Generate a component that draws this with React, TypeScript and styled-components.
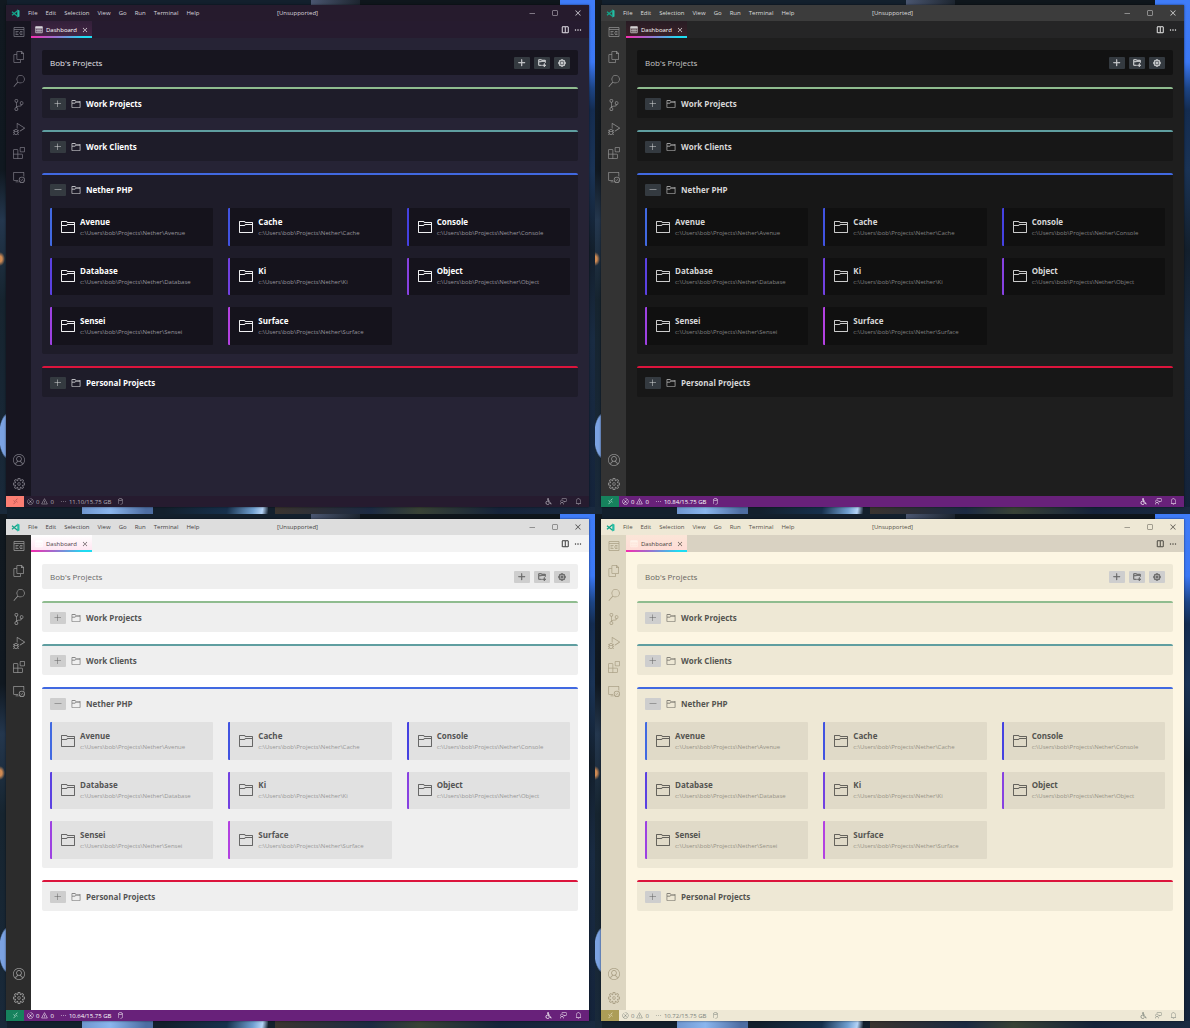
import React, { useState } from "react";
import styled, { createGlobalStyle, ThemeProvider } from "styled-components";
import {
  VscAccount,
  VscAdd,
  VscBell,
  VscChromeClose,
  VscChromeMaximize,
  VscChromeMinimize,
  VscClose,
  VscDatabase,
  VscDebugAlt,
  VscEllipsis,
  VscError,
  VscExtensions,
  VscFeedback,
  VscFiles,
  VscFolder,
  VscGear,
  VscNewFolder,
  VscRemote,
  VscRemoteExplorer,
  VscRemove,
  VscSearch,
  VscSettingsGear,
  VscSourceControl,
  VscSplitHorizontal,
  VscWarning,
} from "react-icons/vsc";

/* ---------- themes ---------- */

interface EditorTheme {
  name: string;
  memory: string;
  titleBg: string;
  titleText: string;
  activityBg: string;
  activityIcon: string;
  tabBarBg: string;
  tabBg: string;
  tabText: string;
  tabIcon: string;
  editorBg: string;
  headerBg: string;
  headerText: string;
  cardBg: string;
  itemBg: string;
  strong: string;
  folder: string;
  path: string;
  buttonBg: string;
  buttonIcon: string;
  statusBg: string;
  statusText: string;
  remoteBg: string;
  remoteIcon: string;
}

const themes: EditorTheme[] = [
  {
    name: "Synthwave",
    memory: "11.10/15.75 GB",
    titleBg: "#261b2d",
    titleText: "#d8d4dc",
    activityBg: "#171520",
    activityIcon: "#75737d",
    tabBarBg: "#261b2f",
    tabBg: "linear-gradient(#33203a, #432544)",
    tabText: "#ffffff",
    tabIcon: "#d8d5db",
    editorBg: "#262335",
    headerBg: "#17151f",
    headerText: "#e6e5ea",
    cardBg: "#1e1c29",
    itemBg: "#15131c",
    strong: "#ffffff",
    folder: "#f0f0f2",
    path: "#98969e",
    buttonBg: "#343a40",
    buttonIcon: "#d9dbdc",
    statusBg: "#261b2f",
    statusText: "#b4afb9",
    remoteBg: "#fb7e73",
    remoteIcon: "#8c3f45",
  },
  {
    name: "Dark",
    memory: "10.84/15.75 GB",
    titleBg: "#3c3c3c",
    titleText: "#dcdcdc",
    activityBg: "#333333",
    activityIcon: "#8c8c8c",
    tabBarBg: "#252526",
    tabBg: "linear-gradient(#281c24, #3a2028)",
    tabText: "#ffffff",
    tabIcon: "#d4d0d2",
    editorBg: "#1e1e1e",
    headerBg: "#121212",
    headerText: "#c8c8c8",
    cardBg: "#171717",
    itemBg: "#101010",
    strong: "#d8d8d8",
    folder: "#cccccc",
    path: "#828282",
    buttonBg: "#343a40",
    buttonIcon: "#d9dbdc",
    statusBg: "#68217a",
    statusText: "#ffffff",
    remoteBg: "#16825d",
    remoteIcon: "#e8fff6",
  },
  {
    name: "Light",
    memory: "10.64/15.75 GB",
    titleBg: "#dddddd",
    titleText: "#444444",
    activityBg: "#2c2c2c",
    activityIcon: "#959595",
    tabBarBg: "#f3f3f3",
    tabBg: "linear-gradient(#ffffff, #ffe6f2)",
    tabText: "#4a4045",
    tabIcon: "#ffffff",
    editorBg: "#ffffff",
    headerBg: "#efefef",
    headerText: "#686868",
    cardBg: "#efefef",
    itemBg: "#e1e1e1",
    strong: "#545454",
    folder: "#666666",
    path: "#979797",
    buttonBg: "#cecece",
    buttonIcon: "#606060",
    statusBg: "#68217a",
    statusText: "#ffffff",
    remoteBg: "#16825d",
    remoteIcon: "#e8fff6",
  },
  {
    name: "Solarized",
    memory: "10.72/15.75 GB",
    titleBg: "#eee8d5",
    titleText: "#55524a",
    activityBg: "#ddd6c1",
    activityIcon: "#aca288",
    tabBarBg: "#d9d2c2",
    tabBg: "linear-gradient(#fbe6d8, #ffdcd6)",
    tabText: "#44403a",
    tabIcon: "#fff3ea",
    editorBg: "#fdf6e3",
    headerBg: "#eee8d5",
    headerText: "#686660",
    cardBg: "#eee8d5",
    itemBg: "#e0dac8",
    strong: "#545450",
    folder: "#64625c",
    path: "#969286",
    buttonBg: "#cecece",
    buttonIcon: "#606060",
    statusBg: "#eee8d5",
    statusText: "#7c837c",
    remoteBg: "#ac9d57",
    remoteIcon: "#fdf6e3",
  },
];

declare module "styled-components" {
  export interface DefaultTheme extends EditorTheme {}
}

/* ---------- data ---------- */

interface Project {
  name: string;
  color: string;
}

interface Category {
  name: string;
  color: string;
  open?: boolean;
  projects: Project[];
}

const categories: Category[] = [
  { name: "Work Projects", color: "#8fbc8f", projects: [] },
  { name: "Work Clients", color: "#5f9ea0", projects: [] },
  {
    name: "Nether PHP",
    color: "#4169e1",
    open: true,
    projects: [
      { name: "Avenue", color: "#4169e1" },
      { name: "Cache", color: "#4153e1" },
      { name: "Console", color: "#4541e1" },
      { name: "Database", color: "#5b41e1" },
      { name: "Ki", color: "#7141e1" },
      { name: "Object", color: "#8741e1" },
      { name: "Sensei", color: "#9d41e1" },
      { name: "Surface", color: "#b341e1" },
    ],
  },
  { name: "Personal Projects", color: "#dc143c", projects: [] },
];

const menus = ["File", "Edit", "Selection", "View", "Go", "Run", "Terminal", "Help"];

/* ---------- layout ---------- */

const GlobalStyle = createGlobalStyle`
  * { box-sizing: border-box; }
  body {
    margin: 0;
    background: #121a22;
    font-family: "Open Sans", "Noto Sans", sans-serif;
  }
  button {
    margin: 0;
    padding: 0;
    border: 0;
    background: none;
    color: inherit;
    font: inherit;
    cursor: pointer;
  }
  h1, h2, h3, p, ul { margin: 0; padding: 0; }
  svg { display: block; flex: none; }
`;

const Desktops = styled.main`
  display: grid;
  grid-template-columns: 1fr 1fr;
  grid-auto-rows: 1fr;
  min-height: 100vh;
`;

const Desktop = styled.section`
  display: flex;
  padding: 5px 6px 7px 6px;
  background:
    radial-gradient(ellipse 5px 7px at 0 259px, #d08a52 40%, transparent) no-repeat,
    radial-gradient(ellipse 11px 25px at 9px 436px, #7ba2e2 85%, transparent 95%) 0 0 / 7px 100% no-repeat,
    linear-gradient(90deg, #6f96cf, #8ab6ee 40%, #4d6da2 90%) 82px 100% / 71px 7px no-repeat,
    linear-gradient(100deg, transparent, #16304c 60%, #6f9fd0 85%, #b4d4f8 94%, transparent) 165px 100% / 103px 7px no-repeat,
    linear-gradient(90deg, #3a342f, #1c2a42 30%, #384235 45%, #15233a 70%, #1a2a40) 100% 100% / 320px 7px no-repeat,
    linear-gradient(#0f161c, #0f161c) 360px 0 / 200px 5px no-repeat,
    linear-gradient(90deg, #4a5670, #1c242e) 311px 0 / 50px 5px no-repeat,
    linear-gradient(#3f7cf8, #3f7cf8) 100% 0 / 35px 5px no-repeat,
    linear-gradient(#3f7cf8, #3b78f4 62px, #1d4586 88px, #142c50 110px, #1a3355 170px, #131f2c 250px, #192b42 340px, #14233a) 100% 0 / 6px 100% no-repeat,
    linear-gradient(#111920, #101820 170px, #24374e 220px, #16242f 300px, #19293a) 0 0 / 7px 100% no-repeat,
    #13202d;
`;

const Window = styled.article`
  flex: 1;
  min-width: 0;
  display: flex;
  flex-direction: column;
  background: ${(p) => p.theme.editorBg};
  box-shadow: 0 0 2px rgba(0, 0, 0, 0.6);
`;

/* title bar */

const TitleBar = styled.header`
  display: grid;
  grid-template-columns: 1fr auto 1fr;
  align-items: center;
  height: 16px;
  background: ${(p) => p.theme.titleBg};
  color: ${(p) => p.theme.titleText};
  font-size: 6px;
  line-height: 8px;
`;

const MenuBar = styled.nav`
  display: flex;
  align-items: center;
  gap: 8px;
  padding-left: 5px;
  white-space: nowrap;
`;

const WindowControls = styled.div`
  display: flex;
  justify-content: flex-end;
`;

const WindowControl = styled.button`
  display: grid;
  place-items: center;
  width: 23px;
  height: 16px;
  font-size: 8px;
`;

/* body */

const Body = styled.div`
  flex: 1;
  display: flex;
  min-height: 0;
`;

const ActivityBar = styled.nav`
  display: flex;
  flex-direction: column;
  width: 25px;
  background: ${(p) => p.theme.activityBg};
  color: ${(p) => p.theme.activityIcon};
`;

const ActivityButton = styled.button`
  display: grid;
  place-items: center;
  height: 24px;
  font-size: 12px;
`;

const Spacer = styled.div`
  flex: 1;
`;

const Editor = styled.div`
  flex: 1;
  min-width: 0;
`;

const TabBar = styled.div`
  display: flex;
  align-items: stretch;
  height: 17px;
  background: ${(p) => p.theme.tabBarBg};
  color: ${(p) => p.theme.titleText};
`;

const Tab = styled.div`
  display: flex;
  align-items: center;
  gap: 3px;
  padding: 2px 3px 0 4px;
  border-bottom: 2px solid;
  border-image: linear-gradient(90deg, #f92aad, #9b6fd0 40%, #1fdcf2 85%) 1;
  background: ${(p) => p.theme.tabBg};
  color: ${(p) => p.theme.tabText};
  font-size: 6px;
  line-height: 8px;
`;

const TabIcon = styled.svg`
  width: 8px;
  height: 8px;
  color: ${(p) => p.theme.tabIcon};
`;

const TabClose = styled.button`
  padding-left: 1px;
  font-size: 8px;
`;

const TabActions = styled.div`
  display: flex;
  align-items: center;
  gap: 5px;
  margin-left: auto;
  padding-right: 7px;
  font-size: 8px;

  svg {
    stroke-width: 1;
  }
`;

/* dashboard */

const Dashboard = styled.div`
  display: flex;
  flex-direction: column;
  gap: 12px;
  padding: 12px 11px;
`;

const DashboardHeader = styled.header`
  display: flex;
  align-items: center;
  gap: 4px;
  height: 25px;
  padding: 0 8px;
  border-radius: 2px;
  background: ${(p) => p.theme.headerBg};
`;

const DashboardTitle = styled.h1`
  flex: 1;
  color: ${(p) => p.theme.headerText};
  font-size: 8px;
  font-weight: 400;
  line-height: 12px;
`;

const IconButton = styled.button`
  display: grid;
  place-items: center;
  width: 16px;
  height: 12px;
  border-radius: 1px;
  background: ${(p) => p.theme.buttonBg};
  color: ${(p) => p.theme.buttonIcon};
  font-size: 8px;
`;

const HeaderButton = styled(IconButton)`
  svg {
    stroke-width: 1;
  }
`;

const CategoryCard = styled.section<{ $color: string }>`
  border-top: 2px solid ${(p) => p.$color};
  border-radius: 2px;
  background: ${(p) => p.theme.cardBg};
`;

const CategoryHead = styled.div`
  display: flex;
  align-items: center;
  gap: 5px;
  padding: 9px 8px 8px;
  color: ${(p) => p.theme.folder};
  font-size: 10px;
`;

const CategoryName = styled.h2`
  color: ${(p) => p.theme.strong};
  font-size: 8px;
  font-weight: 700;
  line-height: 12px;
`;

const ProjectGrid = styled.ul`
  display: grid;
  grid-template-columns: repeat(3, 1fr);
  gap: 12px 15px;
  min-height: 137px;
  margin: 4px 8px 9px;
  list-style: none;
`;

const ProjectCell = styled.li`
  display: grid;
  min-width: 0;
`;

const ProjectCard = styled.button<{ $color: string }>`
  display: flex;
  align-items: center;
  gap: 4px;
  min-width: 0;
  padding: 0 8px;
  border-left: 2px solid ${(p) => p.$color};
  border-radius: 1px;
  background: ${(p) => p.theme.itemBg};
  color: ${(p) => p.theme.folder};
  font-size: 16px;
  text-align: left;
`;

const ProjectText = styled.span`
  display: flex;
  flex-direction: column;
  min-width: 0;
`;

const ProjectName = styled.strong`
  color: ${(p) => p.theme.strong};
  font-size: 8px;
  font-weight: 700;
  line-height: 12px;
`;

const ProjectPath = styled.span`
  color: ${(p) => p.theme.path};
  font-size: 6px;
  line-height: 10px;
  white-space: nowrap;
`;

/* status bar */

const StatusBar = styled.footer`
  display: flex;
  align-items: center;
  height: 11px;
  background: ${(p) => p.theme.statusBg};
  color: ${(p) => p.theme.statusText};
  font-size: 6px;
  line-height: 8px;
`;

const RemoteButton = styled.button`
  display: grid;
  place-items: center;
  width: 18px;
  height: 11px;
  background: ${(p) => p.theme.remoteBg};
  color: ${(p) => p.theme.remoteIcon};
  font-size: 7px;
`;

const StatusItem = styled.button`
  display: flex;
  align-items: center;
  gap: 2px;
  white-space: nowrap;

  svg {
    width: 7px;
    height: 7px;
  }
`;

const StatusGroup = styled.div`
  display: flex;
  gap: 6px;
  padding-left: 3px;
`;

const StatusTools = styled(StatusGroup)`
  gap: 8px;
  margin-left: auto;
  padding-right: 7px;
`;

/* ---------- drawings ---------- */

const Logo = () => (
  <svg width="9" height="9" viewBox="0 0 18 18" fill="none" aria-hidden="true">
    <path d="M12.5 1 17 3v12l-4.500 2z" fill="#24bfa5" />
    <path d="M13 3.500 2 12.500M13 14.500 2 5.500" stroke="#12a489" strokeWidth="2.600" />
  </svg>
);

const ProjectsIcon = () => (
  <svg width="12" height="12" viewBox="0 0 24 24" fill="none" stroke="currentColor" strokeWidth="1.600" aria-hidden="true">
    <path d="M2 1h20v18H2zM2 5h20" />
    <path d="M5 9h6M14 9h5M5 12h4M12 12h7M5 15h6M14 15h5" />
  </svg>
);

const GridIcon = () => (
  <TabIcon viewBox="0 0 16 16" fill="none" stroke="currentColor" strokeWidth="1.500" aria-hidden="true">
    <path d="M1.500 1.500h13v12h-13zM1.500 5.500h13M1.500 9.500h13M6 5v8M10 5v8" />
    <path d="M1 1h14v3H1z" fill="currentColor" stroke="none" />
  </TabIcon>
);

const SeatIcon = () => (
  <svg viewBox="0 0 16 16" fill="none" stroke="currentColor" strokeWidth="1.800" aria-hidden="true">
    <circle cx="7" cy="2.500" r="1.200" fill="currentColor" />
    <path d="M7 4.500V9h4l2 4.500h2M5.500 7a4 4 0 1 0 4.500 5M7 6.500h3.500" />
  </svg>
);

/* ---------- components ---------- */

function CategoryPanel({ category }: { category: Category }) {
  const [open, setOpen] = useState(Boolean(category.open));
  return (
    <CategoryCard $color={category.color}>
      <CategoryHead>
        <IconButton
          type="button"
          aria-expanded={open}
          aria-label={`Toggle ${category.name}`}
          onClick={() => setOpen(!open)}
        >
          {open ? <VscRemove /> : <VscAdd />}
        </IconButton>
        <VscFolder />
        <CategoryName>{category.name}</CategoryName>
      </CategoryHead>
      {open && category.projects.length > 0 && (
        <ProjectGrid>
          {category.projects.map((project) => (
            <ProjectCell key={project.name}>
              <ProjectCard type="button" $color={project.color}>
                <VscFolder />
                <ProjectText>
                  <ProjectName>{project.name}</ProjectName>
                  <ProjectPath>{`c:\\Users\\bob\\Projects\\Nether\\${project.name}`}</ProjectPath>
                </ProjectText>
              </ProjectCard>
            </ProjectCell>
          ))}
        </ProjectGrid>
      )}
    </CategoryCard>
  );
}

const activities = [
  { label: "Projects", Icon: ProjectsIcon },
  { label: "Explorer", Icon: VscFiles },
  { label: "Search", Icon: VscSearch },
  { label: "Source Control", Icon: VscSourceControl },
  { label: "Run and Debug", Icon: VscDebugAlt },
  { label: "Extensions", Icon: VscExtensions },
  { label: "Remote Explorer", Icon: VscRemoteExplorer },
];

function EditorWindow({ theme }: { theme: EditorTheme }) {
  return (
    <ThemeProvider theme={theme}>
      <Window aria-label={theme.name}>
        <TitleBar>
          <MenuBar>
            <Logo />
            {menus.map((menu) => (
              <button type="button" key={menu}>
                {menu}
              </button>
            ))}
          </MenuBar>
          <span>[Unsupported]</span>
          <WindowControls>
            <WindowControl type="button" aria-label="Minimize">
              <VscChromeMinimize />
            </WindowControl>
            <WindowControl type="button" aria-label="Maximize">
              <VscChromeMaximize />
            </WindowControl>
            <WindowControl type="button" aria-label="Close window">
              <VscChromeClose />
            </WindowControl>
          </WindowControls>
        </TitleBar>

        <Body>
          <ActivityBar>
            {activities.map(({ label, Icon }) => (
              <ActivityButton type="button" key={label} aria-label={label}>
                <Icon />
              </ActivityButton>
            ))}
            <Spacer />
            <ActivityButton type="button" aria-label="Accounts">
              <VscAccount />
            </ActivityButton>
            <ActivityButton type="button" aria-label="Manage">
              <VscSettingsGear />
            </ActivityButton>
          </ActivityBar>

          <Editor>
            <TabBar>
              <Tab>
                <GridIcon />
                <button type="button">Dashboard</button>
                <TabClose type="button" aria-label="Close tab">
                  <VscClose />
                </TabClose>
              </Tab>
              <TabActions>
                <button type="button" aria-label="Split editor">
                  <VscSplitHorizontal />
                </button>
                <button type="button" aria-label="More actions">
                  <VscEllipsis />
                </button>
              </TabActions>
            </TabBar>

            <Dashboard>
              <DashboardHeader>
                <DashboardTitle>Bob's Projects</DashboardTitle>
                <HeaderButton type="button" aria-label="Add project">
                  <VscAdd />
                </HeaderButton>
                <HeaderButton type="button" aria-label="Add folder">
                  <VscNewFolder />
                </HeaderButton>
                <HeaderButton type="button" aria-label="Settings">
                  <VscGear />
                </HeaderButton>
              </DashboardHeader>
              {categories.map((category) => (
                <CategoryPanel key={category.name} category={category} />
              ))}
            </Dashboard>
          </Editor>
        </Body>

        <StatusBar>
          <RemoteButton type="button" aria-label="Open remote window">
            <VscRemote />
          </RemoteButton>
          <StatusGroup>
            <StatusItem type="button">
              <VscError />0<VscWarning />0
            </StatusItem>
            <StatusItem type="button">
              <VscEllipsis />
              {theme.memory}
            </StatusItem>
            <StatusItem type="button" aria-label="Storage">
              <VscDatabase />
            </StatusItem>
          </StatusGroup>
          <StatusTools>
            <StatusItem type="button" aria-label="Accessibility">
              <SeatIcon />
            </StatusItem>
            <StatusItem type="button" aria-label="Feedback">
              <VscFeedback />
            </StatusItem>
            <StatusItem type="button" aria-label="Notifications">
              <VscBell />
            </StatusItem>
          </StatusTools>
        </StatusBar>
      </Window>
    </ThemeProvider>
  );
}

export default function App() {
  return (
    <>
      <GlobalStyle />
      <Desktops>
        {themes.map((theme) => (
          <Desktop key={theme.name}>
            <EditorWindow theme={theme} />
          </Desktop>
        ))}
      </Desktops>
    </>
  );
}
